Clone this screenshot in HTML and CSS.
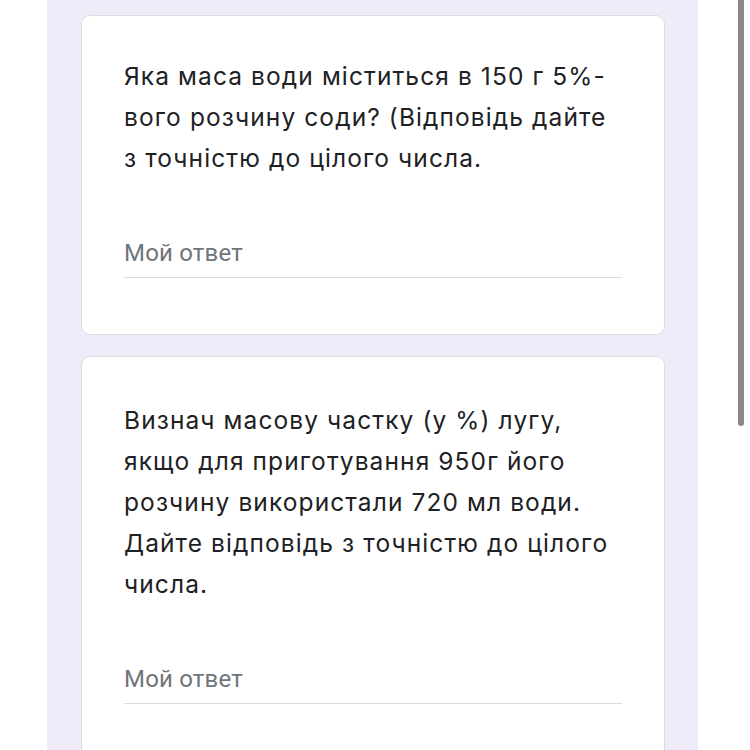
FILE: index.html
```html
<!DOCTYPE html>
<html lang="uk">
<head>
    <meta charset="UTF-8">
    <meta name="viewport" content="width=device-width, initial-scale=1.0">
    <title>Форма</title>
    <link rel="stylesheet" href="styles.css">
</head>
<body>
    <div class="page">
        <div class="form">
            <div class="card">
                <div class="question">Яка маса води міститься в 150 г 5%-вого розчину соди? (Відповідь дайте з точністю до цілого числа.</div>
                <div class="answer">Мой ответ</div>
            </div>
            <div class="card card-tall">
                <div class="question">Визнач масову частку (у %) лугу, якщо для приготування 950г його розчину використали 720 мл води. Дайте відповідь з точністю до цілого числа.</div>
                <div class="answer">Мой ответ</div>
            </div>
        </div>
    </div>
    <div class="scrollbar"></div>
</body>
</html>
```

FILE: styles.css
```css
body {
    margin: 0;
    background: #fff;
    overflow: hidden;
}
.page {
    display: flex;
    padding-left: 47px;
    height: 750px;
}
.form {
    width: 584px;
    background: #f0ebf8;
    padding: 15px 33px 0 34px;
}
.card {
    background: #fff;
    border: 1px solid #dadce0;
    border-radius: 9px;
    padding: 40px 42px 56px 42px;
    margin-bottom: 21px;
}
.card-tall {
    padding-top: 43px;
}
.question {
    font-family: Inter, "Noto Sans", sans-serif;
    font-size: 24.5px;
    letter-spacing: 1.1px;
    line-height: 41px;
    color: #202124;
}
.answer {
    margin-top: 59px;
    font-family: Roboto, "Liberation Sans", sans-serif;
    font-size: 24px;
    letter-spacing: 0.2px;
    line-height: 30px;
    color: #70757a;
    padding-bottom: 9px;
    border-bottom: 1px solid #dadce0;
}
.scrollbar {
    position: absolute;
    top: 0;
    left: 738px;
    width: 6px;
    height: 426px;
    background: #888;
    border-radius: 0 0 3px 3px;
}
```
